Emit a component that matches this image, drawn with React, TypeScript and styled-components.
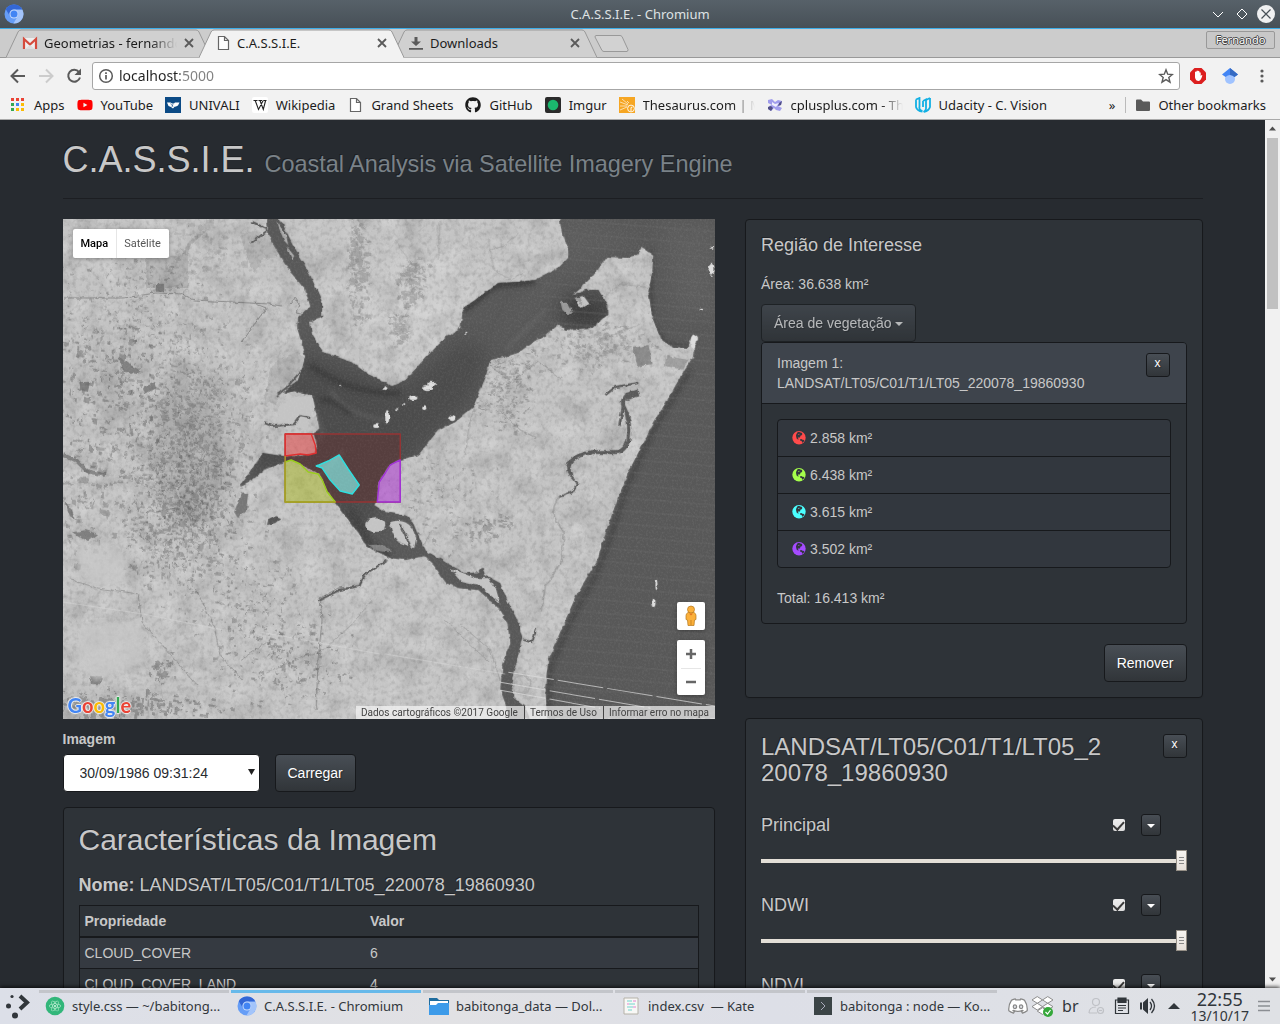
import React from "react";
import styled, { createGlobalStyle, css } from "styled-components";
import { FaGithub, FaDiscord, FaDropbox, FaReact, FaYoutube } from "react-icons/fa";

const ui = `"Noto Sans", "Open Sans", sans-serif`;
const sans = `"Liberation Sans", Arial, sans-serif`;
const roboto = `Roboto, "Liberation Sans", sans-serif`;
const edge = "#17191c";

const GlobalStyle = createGlobalStyle`
  * { box-sizing: border-box; }
  body { margin: 0; background: #272b30; overflow: hidden; }
  button, input, select { font: inherit; color: inherit; }
  button { border: 0; padding: 0; background: none; cursor: pointer; }
  h1, h2, h3, h4, p { margin: 0; font-weight: 400; }
  a { color: inherit; text-decoration: none; }
  svg { display: block; flex: none; }
`;

/* ---------- window frame ---------- */

const Screen = styled.div`
  display: flex;
  flex-direction: column;
  height: 100vh;
  font: 13px/18px ${ui};
  color: #1c1c1c;
`;

const TitleBar = styled.header`
  display: grid;
  grid-template-columns: 1fr auto 1fr;
  align-items: center;
  flex: none;
  height: 29px;
  padding: 0 4px;
  color: #dfe2e4;
  background: linear-gradient(#576169, #475057);
  border-bottom: 1px solid #3daee9;
`;

const WindowButtons = styled.div`
  display: flex;
  justify-content: flex-end;
  gap: 4px;
`;

const TabStrip = styled.nav`
  display: flex;
  flex: none;
  height: 29px;
  padding: 0 5px 0 6px;
  background: #ccc;
  border-bottom: 1px solid #999;
`;

const TabBox = styled.div<{ $active?: boolean }>`
  position: relative;
  display: flex;
  align-items: center;
  flex: none;
  gap: 6px;
  width: 205px;
  height: 29px;
  margin-right: -12px;
  padding: 0 16px 1px;
  z-index: ${(p) => (p.$active ? 2 : 1)};
`;

const TabShape = styled.svg`
  position: absolute;
  inset: 0;
  z-index: -1;
`;

const TabTitle = styled.button<{ $fade?: boolean }>`
  flex: 1;
  min-width: 0;
  overflow: hidden;
  text-align: left;
  white-space: nowrap;
  ${(p) => p.$fade && css`mask-image: linear-gradient(to right, #000 80%, transparent);`}
`;

const NewTab = styled.button`
  margin-left: 8px;
`;

const UserTag = styled.button`
  margin: 2px 0 0 auto;
  width: 69px;
  height: 18px;
  border: 1px solid #999;
  border-radius: 2px;
  background: #c8c8c8;
  color: #fff;
  font-size: 11px;
  line-height: 16px;
  text-shadow: 1px 0 #444, -1px 0 #444, 0 1px #444, 0 -1px #444;
`;

const Toolbar = styled.div`
  display: flex;
  align-items: center;
  flex: none;
  height: 34px;
  padding: 2px 9px 0 8px;
  background: #f2f2f2;
`;

const NavButtons = styled.div`
  display: flex;
  gap: 8px;
  width: 84px;
`;

const Omnibox = styled.label`
  display: flex;
  align-items: center;
  flex: 1;
  gap: 5px;
  height: 28px;
  padding: 0 5px;
  background: #fff;
  border: 1px solid #a6a6a6;
  border-radius: 3px;
`;

const Address = styled.input`
  flex: 1;
  height: 24px;
  padding: 0 0 2px;
  border: 0;
  outline: 0;
  font-size: 14px;
  color: #222;
  background: linear-gradient(to right, #222 61px, #808080 61px);
  background-clip: text;
  -webkit-text-fill-color: transparent;
`;

const Extensions = styled.div`
  display: flex;
  gap: 14px;
  padding-left: 9px;
`;

const Bookmarks = styled.nav`
  display: flex;
  align-items: center;
  flex: none;
  gap: 12px;
  height: 28px;
  padding: 0 14px 2px 10px;
  background: #f2f2f2;
  border-bottom: 1px solid #a9a9a9;
  white-space: nowrap;
`;

const Bookmark = styled.a`
  display: flex;
  align-items: center;
  gap: 8px;
`;

const BookmarkText = styled.span<{ $cut?: boolean }>`
  ${(p) => p.$cut && css`
    width: 112px;
    overflow: hidden;
    mask-image: linear-gradient(to right, #000 80%, transparent);
  `}
`;

const BookmarkEnd = styled.div`
  display: flex;
  align-items: center;
  gap: 10px;
  margin-left: auto;
`;

const Rule = styled.span`
  width: 1px;
  height: 16px;
  background: #bbb;
`;

/* ---------- page ---------- */

const Viewport = styled.div`
  display: flex;
  flex: 1;
  min-height: 0;
`;

const Page = styled.main`
  flex: 1;
  overflow: hidden;
  background: #272b30;
  color: #c8c8c8;
  font: 14px/20px ${sans};
`;

const Container = styled.div`
  max-width: 1170px;
  margin: 0 auto;
  padding: 0 15px;
`;

const PageHeader = styled.header`
  margin-bottom: 20px;
  padding: 20px 0 14px;
  border-bottom: 1px solid #1c1e22;
`;

const Brand = styled.h1`
  font-size: 36px;
  line-height: 40px;
  text-shadow: -1px -1px 0 rgba(0, 0, 0, 0.3);
`;

const Tagline = styled.small`
  font-size: 65%;
  color: #7a8288;
`;

const Row = styled.div`
  display: flex;
  margin: 0 -15px;
`;

const Column = styled.section<{ $span: number }>`
  width: calc(100% * ${(p) => p.$span} / 12);
  padding: 0 15px;
`;

const Panel = styled.section`
  margin-bottom: 20px;
  padding: 15px;
  background: #2e3338;
  border: 1px solid ${edge};
  border-radius: 4px;
  box-shadow: 0 1px 1px rgba(0, 0, 0, 0.05);
`;

const Heading = styled.h4`
  font-size: 18px;
  line-height: 20px;
  text-shadow: -1px -1px 0 rgba(0, 0, 0, 0.3);
`;

const Button = styled.button<{ $muted?: boolean }>`
  height: 38px;
  padding: 0 12px;
  color: #fff;
  text-shadow: 1px 1px 1px rgba(0, 0, 0, 0.3);
  background: linear-gradient(#484e55, #3a3f44 60%, #313539);
  border: 1px solid ${edge};
  border-radius: 4px;
  opacity: ${(p) => (p.$muted ? 0.65 : 1)};
`;

const SmallButton = styled(Button)`
  flex: none;
  width: 24px;
  height: 24px;
  padding: 0 0 4px;
  border-radius: 3px;
  font-size: 12px;
  line-height: 18px;
`;

const CaretButton = styled(SmallButton)`
  width: 20px;
  height: 22px;
  padding: 0;
`;

const Caret = styled.span`
  display: inline-block;
  vertical-align: middle;
  border: 4px solid transparent;
  border-top-color: currentColor;
  border-bottom: 0;
`;

const MapFrame = styled.div`
  position: relative;
  height: 500px;
  margin-bottom: 10px;
  overflow: hidden;
  background: #bebebe;
  font-family: ${roboto};
`;

const MapType = styled.div`
  position: absolute;
  top: 10px;
  left: 10px;
  display: flex;
  height: 29px;
  background: #fff;
  border-radius: 2px;
  box-shadow: 0 1px 4px rgba(0, 0, 0, 0.3);
  font-size: 11px;
`;

const MapTypeButton = styled.button<{ $on?: boolean }>`
  padding: 0 8px;
  color: ${(p) => (p.$on ? "#000" : "#565656")};
  font-weight: ${(p) => (p.$on ? 500 : 400)};
  & + & { padding-left: 7px; border-left: 1px solid #e6e6e6; }
`;

const MapTools = styled.div`
  position: absolute;
  right: 10px;
  bottom: 24px;
  display: grid;
  gap: 10px;
`;

const MapTool = styled.div`
  display: grid;
  justify-items: center;
  width: 28px;
  background: #fff;
  border-radius: 2px;
  box-shadow: 0 1px 4px rgba(0, 0, 0, 0.3);
`;

const ToolButton = styled.button`
  display: grid;
  place-items: center;
  width: 20px;
  height: 28px;
  & + & { height: 27px; border-top: 1px solid #e6e6e6; }
`;

const Logo = styled.a`
  position: absolute;
  left: 5px;
  bottom: 2px;
  font: 700 20px/24px Lato, sans-serif;
  text-shadow: 1px 0 1px #eee, -1px 0 1px #eee, 0 1px 1px #eee, 0 -1px 1px #eee;
`;

const LogoLetter = styled.span<{ $c: string }>`
  color: ${(p) => p.$c};
`;

const Credits = styled.div`
  position: absolute;
  right: 0;
  bottom: 0;
  display: flex;
  height: 13px;
  color: #444;
  background: rgba(245, 245, 245, 0.7);
  font-size: 10px;
  line-height: 13px;
`;

const Credit = styled.a`
  padding: 0 6px 0 5px;
  & + & { border-left: 1px solid #444; }
`;

const FieldLabel = styled.label`
  display: block;
  margin-bottom: 5px;
  font-weight: 700;
`;

const Controls = styled.div`
  display: flex;
  gap: 15px;
  margin-bottom: 15px;
`;

const SelectWrap = styled.div`
  position: relative;
  width: 197px;
`;

const Select = styled.select`
  appearance: none;
  width: 100%;
  height: 38px;
  padding: 0 16px;
  color: #272b30;
  background: #fff;
  border: 1px solid ${edge};
  border-radius: 4px;
`;

const SelectArrow = styled.svg`
  position: absolute;
  right: 5px;
  top: 15px;
  pointer-events: none;
`;

const Title = styled.h2`
  margin-bottom: 18px;
  font-size: 30px;
  line-height: 34px;
  text-shadow: -1px -1px 0 rgba(0, 0, 0, 0.3);
`;

const Table = styled.table`
  width: 100%;
  margin-top: 10px;
  border: 1px solid ${edge};
  border-collapse: collapse;
  th, td { padding: 5px; text-align: left; line-height: 20px; border-top: 1px solid ${edge}; }
  th { border-bottom: 2px solid ${edge}; }
  th:first-child { width: 286px; }
  tbody tr:nth-child(odd) { background: #353a41; }
`;

const Area = styled.p`
  margin: 19px 0 10px;
`;

const Inner = styled.section`
  border: 1px solid ${edge};
  border-radius: 4px;
`;

const InnerHead = styled.header`
  display: flex;
  justify-content: space-between;
  padding: 10px 16px 10px 15px;
  background: #3e444c;
  border-bottom: 1px solid ${edge};
  border-radius: 3px 3px 0 0;
`;

const InnerBody = styled.div`
  padding: 15px;
`;

const List = styled.ul`
  margin: 0 0 20px;
  padding: 0;
  list-style: none;
  background: #32373e;
  border: 1px solid ${edge};
  border-radius: 4px;
`;

const Item = styled.li`
  display: flex;
  align-items: center;
  gap: 4px;
  height: 36px;
  padding: 0 14px;
  & + & { height: 37px; border-top: 1px solid ${edge}; }
`;

const Actions = styled.div`
  display: flex;
  justify-content: flex-end;
  margin-top: 20px;
`;

const LayerHead = styled.header`
  display: flex;
  justify-content: space-between;
  margin-bottom: 28px;
`;

const LayerTitle = styled.h3`
  width: 82%;
  font-size: 24px;
  line-height: 26px;
  word-break: break-all;
  text-shadow: -1px -1px 0 rgba(0, 0, 0, 0.3);
`;

const Layer = styled.div`
  height: 80px;
`;

const LayerRow = styled.div`
  display: flex;
  align-items: center;
  gap: 16px;
  height: 22px;
  padding-right: 26px;
`;

const LayerName = styled.label`
  flex: 1;
  font-size: 18px;
  text-shadow: -1px -1px 0 rgba(0, 0, 0, 0.3);
`;

const Check = styled.input`
  appearance: none;
  display: grid;
  place-items: center;
  width: 12px;
  height: 12px;
  margin: 0;
  background: linear-gradient(#eee, #ddd);
  border-radius: 2px;
  &:checked::after {
    content: "";
    width: 5px;
    height: 9px;
    margin-bottom: 3px;
    border: solid #3a3a3a;
    border-width: 0 2px 2px 0;
    transform: rotate(42deg);
  }
`;

const Slider = styled.input`
  appearance: none;
  display: block;
  width: 100%;
  height: 21px;
  margin: 14px 0 0;
  background: linear-gradient(#e3dfd7, #e3dfd7) center / 100% 4px no-repeat;
  &::-webkit-slider-thumb {
    appearance: none;
    width: 11px;
    height: 21px;
    border: 1px solid #958f86;
    background:
      linear-gradient(#888, #888) 50% 6px / 5px 1px no-repeat,
      linear-gradient(#888, #888) 50% 9px / 5px 1px no-repeat,
      linear-gradient(#888, #888) 50% 12px / 5px 1px no-repeat,
      linear-gradient(#f6f4f0, #e6e0da);
  }
`;

const Scrollbar = styled.div`
  display: flex;
  flex-direction: column;
  align-items: center;
  flex: none;
  width: 15px;
  background: #f1f1f1;
`;

const Thumb = styled.div`
  width: 11px;
  height: 171px;
  margin: 1px 0 auto;
  background: #c1c1c1;
`;

/* ---------- desktop panel ---------- */

const Taskbar = styled.footer`
  position: relative;
  display: flex;
  align-items: center;
  flex: none;
  height: 36px;
  padding-right: 9px;
  color: #31363b;
  background: linear-gradient(to right, #dcdfe8, #e1e1e4 35%, #dddfe7 60%, #dfe1e5);
  box-shadow: 0 -1px 4px rgba(0, 0, 0, 0.8);
`;

const Launcher = styled.button`
  width: 39px;
  padding-left: 5px;
`;

const Tasks = styled.div`
  display: flex;
  gap: 2px;
  align-self: stretch;
`;

const Task = styled.button<{ $active?: boolean }>`
  display: flex;
  align-items: center;
  gap: 7px;
  width: 190px;
  margin-top: 2px;
  padding: 0 0 5px 6px;
  border-top: 3px solid ${(p) => (p.$active ? "#67b9ea" : "#c3c5ca")};
  white-space: nowrap;
`;

const TaskText = styled.span`
  white-space: pre;
`;

const Tray = styled.div`
  display: flex;
  align-items: center;
  gap: 8px;
  margin-left: auto;
`;

const TrayApps = styled.div`
  display: flex;
  gap: 3px;
`;

const Layout = styled.button`
  font-size: 16px;
  line-height: 22px;
`;

const Clock = styled.time`
  display: grid;
  justify-items: center;
  font-size: 18px;
  line-height: 20px;
`;

const Day = styled.span`
  font-size: 14px;
  line-height: 14px;
`;

/* ---------- icons ---------- */

const ChromiumIcon = ({ size = 20 }: { size?: number }) => (
  <svg width={size} height={size} viewBox="0 0 20 20">
    <circle cx="10" cy="10" r="9.5" fill="#669df6" />
    <path d="M1.8 5.2A9.5 9.5 0 0 1 18.3 5.6H10A4.5 4.5 0 0 0 6 12.2Z" fill="#3367d6" />
    <path d="M18.4 5.7A9.5 9.5 0 0 1 9.4 19.5L13.9 12A4.5 4.5 0 0 0 10 5.7Z" fill="#aecbfa" opacity=".85" />
    <circle cx="10" cy="10" r="4.5" fill="#c6dafc" />
    <circle cx="10" cy="10" r="3.5" fill="#4285f4" />
  </svg>
);

const PageIcon = () => (
  <svg width="16" height="16" viewBox="0 0 16 16" fill="#fff" stroke="#666" strokeWidth="1.2">
    <path d="M3.5 1.5h6l4 4v9h-10zM9.5 1.5v4h4" />
  </svg>
);

const GmailIcon = () => (
  <svg width="16" height="16" viewBox="0 0 16 16">
    <path d="M1 3h14v11H1z" fill="#eee" />
    <path d="M2 14V4l6 5.500L14 4v10" fill="none" stroke="#d54b3d" strokeWidth="2.2" />
    <path d="M3 14l5-4 5 4z" fill="#ddd" />
  </svg>
);

const DownloadIcon = () => (
  <svg width="16" height="16" viewBox="0 0 16 16" fill="#5a5a5a">
    <path d="M6.500 2h3v4.500H13L8 11 3 6.500h3.500zM1 13h14v1.700H1z" />
  </svg>
);

const CloseIcon = () => (
  <svg width="12" height="12" viewBox="0 0 12 12" stroke="#5a5a5a" strokeWidth="1.8">
    <path d="M2 2l8 8M10 2l-8 8" />
  </svg>
);

const AppsIcon = () => (
  <svg width="16" height="16" viewBox="0 0 16 16">
    {["#ea4335", "#ea4335", "#ea4335", "#34a853", "#4285f4", "#fbbc05", "#34a853", "#fbbc05", "#fbbc05"].map((c, i) => (
      <rect key={i} x={1 + (i % 3) * 5} y={1 + Math.floor(i / 3) * 5} width="3" height="3" fill={c} />
    ))}
  </svg>
);

const UnivaliIcon = () => (
  <svg width="16" height="16" viewBox="0 0 16 16">
    <path d="M0 0h16v16H0z" fill="#0b4a85" />
    <path d="M2 5.500h3.500l1.500 1h2l1-1h4.500l-1.500 3-2 1-1.500.3L8 11.500 6 10 3.500 9z" fill="#fff" />
    <path d="M5.500 6.500l2.500 3M8 7l-1 3" fill="none" stroke="#0b4a85" strokeWidth=".6" />
  </svg>
);

const WikiIcon = () => (
  <svg width="16" height="16" viewBox="0 0 16 16">
    <rect width="16" height="16" rx="2" fill="#fff" />
    <path d="M1.5 3.5h4M6.5 3.5h3.5M11.5 3.5h3M3.2 3.5l3.3 9 4.7-9M8 3.5l3.3 9 2.3-9" fill="none" stroke="#222" strokeWidth="1.1" />
  </svg>
);

const ImgurIcon = () => (
  <svg width="16" height="16" viewBox="0 0 16 16">
    <rect width="16" height="16" rx="2" fill="#2b2b2b" />
    <circle cx="8" cy="8" r="5.3" fill="#1bb76e" />
  </svg>
);

const ThesaurusIcon = () => (
  <svg width="16" height="16" viewBox="0 0 16 16">
    <path d="M0 0h16v16H0z" fill="#f6a623" />
    <g fill="none" stroke="#fff" strokeWidth=".9">
      <path d="M1 5l8 3M3 2l6 5M1 9h7M1 13l7-3M8 4l2 2" opacity=".7" />
      <circle cx="12" cy="11.500" r="3.400" />
      <path d="M12 14v-3.500l1.500-.5" />
    </g>
  </svg>
);

const CppIcon = () => (
  <svg width="16" height="16" viewBox="0 0 16 16">
    <path d="M1 3l4-1 3 3 3-2 4 1-1 4-3 1 4 2-2 3-4-1-2-2-3 3-3-2 1-3 3-1-4-2z" fill="#a09cec" />
    <path d="M1 10l3-1 2 2-2 3-3-2zM12 6l3-2-1 4-3 1z" fill="#514f86" />
    <path d="M5 5l3 2 4-1-3 4-4-2z" fill="#eeeefc" />
  </svg>
);

const UdacityIcon = () => (
  <svg width="16" height="16" viewBox="0 0 16 16" fill="none" stroke="#12b0e4" strokeWidth="1.8">
    <path d="M1 2.500l3.500-1.500v8.500a3.500 3.500 0 0 0 3 4.500M1 2.500v7.500q1 4 6.500 4.500M8 4l3-1.500v9q0 2-2.500 3.500M8 4v6M15 1v9q-1 3.500-6 5" />
    <path d="M11 3l4-2" />
  </svg>
);

const FolderIcon = () => (
  <svg width="14" height="14" viewBox="0 0 14 14" fill="#5a5a5a">
    <path d="M1 1.500h4l2 2h6q1 0 1 1V12q0 1-1 1H1q-1 0-1-1V2.500q0-1 1-1z" />
  </svg>
);

const Globe = ({ color }: { color: string }) => (
  <svg width="14" height="14" viewBox="0 0 14 14">
    <circle cx="7" cy="6.800" r="6.700" fill={color} />
    <g fill="#32373e">
      <path d="M5.500 1.300l1.500-.5 1.400.8 1.300.1.700 1.300-.7 1.200-1.300.6-.3 1.500-1.200.5-.8-.6-.3 1 1 .7-.4.700-1.500-.7L4.200 6 4 4.300l.6-1.500z" />
      <path d="M7.800 8.600l1.500-.6 1.200.8 1.800.1-.4 1.500-1 1.200-.9-.2-.3-1.300-1.400-.3z" />
    </g>
    <path d="M6.200 3.200l1-.4.3.8-.9.500z" fill={color} />
  </svg>
);

const ArrowHead = ({ up }: { up?: boolean }) => (
  <svg width="15" height="17" viewBox="0 0 15 17" fill="#505050">
    <path d={up ? "M4 10.500h7L7.500 6.500z" : "M4 6.500h7L7.500 10.500z"} />
  </svg>
);

/* ---------- satellite scene ---------- */

const WATER =
  "M267 219L268 235 278 252 290 272 305 290 310 306 298 317 297 328 301 342 305 357 302 368 298 380 290 386 284 393 295 391 304 394 312 395 315 408 319 428 314 434 317 446 315 453 300 456 283 456 263 453 252 468 240 486 252 480 264 470 283 462 291 460 304 466 320 474 327 490 335 502 350 522 362 538 367 547 380 553 390 558 405 560 424 556 435 567 445 582 457 588 478 590 497 607 507 623 510 643 502 667 500 690 505 703 508 719 530 719 525 707 513 697 512 677 517 660 522 637 517 620 507 600 500 583 485 575 482 567 478 572 465 573 445 562 425 550 420 540 413 523 405 515 385 512 374 505 377 500 378 482 390 464 400 460 418 455 438 430 455 422 473 407 479 392 485 378 490 360 505 357 518 353 533 342 545 336 558 325 565 330 592 328 607 315 607 305 598 290 585 290 572 295 592 277 607 257 625 258 638 255 641 247 653 255 652 272 648 292 652 318 660 338 672 348 687 348 693 335 697 337 692 358 685 368 668 398 652 425 628 472 618 497 607 527 597 560 577 593 562 627 548 660 545 687 547 719H730V205H557L562 235 568 248 568 258 558 268 535 280 518 282 498 283 482 295 463 308 460 328 445 338 428 355 405 380 392 386 370 375 353 363 337 357 323 352 312 335 310 322 322 318 322 302 310 275 293 245 280 219Z";

const SPECKS: [number, number, number, number][] = [
  [427, 388, 5, 3], [431, 384, 3, 2], [413, 398, 4, 2], [387, 417, 2, 7], [424, 408, 2, 2], [376, 426, 2, 2], [385, 388, 2, 2],
  [452, 418, 3, 3], [434, 383, 2, 1], [711, 270, 3, 6], [711, 248, 2, 1], [701, 310, 2, 1], [656, 585, 1, 5],
  [653, 603, 2, 4], [693, 342, 3, 7], [340, 386, 1, 1], [404, 404, 1, 1], [466, 333, 1, 1], [397, 409, 1, 1],
];

function makeRandom(seed: number) {
  let s = seed;
  return () => {
    s = (s * 16807) % 2147483647;
    return s / 2147483647;
  };
}

interface Cluster { x: number; y: number; rx: number; ry: number; n: number; size: number; o: number; seed: number }

const CLUSTERS: Cluster[] = [
  { x: 190, y: 440, rx: 60, ry: 90, n: 1000, size: 4, o: 0.24, seed: 11 },
  { x: 180, y: 520, rx: 50, ry: 70, n: 700, size: 4, o: 0.26, seed: 29 },
  { x: 110, y: 390, rx: 50, ry: 70, n: 200, size: 6, o: 0.3, seed: 37 },
  { x: 130, y: 310, rx: 90, ry: 60, n: 300, size: 3, o: 0.24, seed: 41 },
  { x: 85, y: 500, rx: 28, ry: 55, n: 70, size: 8, o: 0.24, seed: 53 },
  { x: 120, y: 704, rx: 80, ry: 14, n: 200, size: 7, o: 0.3, seed: 59 },
  { x: 160, y: 670, rx: 14, ry: 16, n: 40, size: 7, o: 0.3, seed: 61 },
  { x: 290, y: 660, rx: 60, ry: 40, n: 150, size: 4, o: 0.28, seed: 67 },
  { x: 240, y: 600, rx: 60, ry: 60, n: 150, size: 4, o: 0.24, seed: 71 },
  { x: 357, y: 262, rx: 11, ry: 50, n: 190, size: 6, o: 0.22, seed: 79 },
  { x: 410, y: 283, rx: 16, ry: 24, n: 100, size: 6, o: 0.22, seed: 83 },
  { x: 398, y: 328, rx: 9, ry: 16, n: 60, size: 6, o: 0.22, seed: 89 },
  { x: 505, y: 385, rx: 28, ry: 38, n: 220, size: 3, o: 0.26, seed: 97 },
  { x: 590, y: 345, rx: 55, ry: 24, n: 200, size: 4, o: 0.2, seed: 101 },
  { x: 485, y: 525, rx: 22, ry: 14, n: 50, size: 6, o: 0.26, seed: 103 },
  { x: 440, y: 500, rx: 50, ry: 50, n: 100, size: 3, o: 0.22, seed: 107 },
  { x: 185, y: 250, rx: 45, ry: 30, n: 60, size: 8, o: 0.12, seed: 109 },
];

const speckles = CLUSTERS.map((c) => {
  const r = makeRandom(c.seed * 7919);
  let d = "";
  for (let i = 0; i < c.n; i++) {
    const x = c.x + (r() + r() + r() - 1.5) * c.rx;
    const y = c.y + (r() + r() + r() - 1.5) * c.ry;
    const w = 1 + r() * r() * c.size * 1.3;
    const h = 1 + r() * r() * c.size;
    d += `M${x.toFixed(1)} ${y.toFixed(1)}l${w.toFixed(1)} ${(w * 0.2).toFixed(1)}l${(-w * 0.1).toFixed(1)} ${h.toFixed(1)}l${(-w).toFixed(1)} ${(-h * 0.2).toFixed(1)}z`;
  }
  return { d, o: c.o };
});

const Scene = () => (
  <svg width="100%" height="100%" viewBox="63 219 652 500" preserveAspectRatio="xMidYMid slice" role="img" aria-label="Mapa">
    <defs>
      <clipPath id="water"><path d={WATER} /></clipPath>
      <filter id="ragged" x="-5%" y="-5%" width="110%" height="110%">
        <feTurbulence type="fractalNoise" baseFrequency="0.18" numOctaves="2" seed="4" />
        <feDisplacementMap in="SourceGraphic" scale="4" xChannelSelector="R" yChannelSelector="G" />
      </filter>
      <filter id="fine" x="0" y="0" width="100%" height="100%" colorInterpolationFilters="sRGB">
        <feTurbulence type="fractalNoise" baseFrequency="0.22" numOctaves="4" seed="8" />
        <feColorMatrix values="0 0 0 0 .2  0 0 0 0 .2  0 0 0 0 .2  1.2 0 0 0 -0.55" />
      </filter>
      <filter id="light" x="0" y="0" width="100%" height="100%" colorInterpolationFilters="sRGB">
        <feTurbulence type="fractalNoise" baseFrequency="0.05" numOctaves="5" seed="15" />
        <feColorMatrix values="0 0 0 0 1  0 0 0 0 1  0 0 0 0 1  0 1.4 0 0 -0.6" />
      </filter>
      <filter id="patch" x="0" y="0" width="100%" height="100%" colorInterpolationFilters="sRGB">
        <feTurbulence type="fractalNoise" baseFrequency="0.04" numOctaves="5" seed="22" />
        <feColorMatrix values="0 0 0 0 .3  0 0 0 0 .3  0 0 0 0 .3  0 0 1.4 0 -0.66" />
      </filter>
      <filter id="grain" x="0" y="0" width="100%" height="100%" colorInterpolationFilters="sRGB">
        <feTurbulence type="fractalNoise" baseFrequency="0.5" numOctaves="2" seed="3" />
        <feColorMatrix values="0 0 0 0 1  0 0 0 0 1  0 0 0 0 1  .5 0 0 0 -0.2" />
      </filter>
      <filter id="soft"><feGaussianBlur stdDeviation="9" /></filter>
      <filter id="soft2"><feGaussianBlur stdDeviation="2" /></filter>
    </defs>

    <path d="M63 219h652v500H63z" fill="#c4c4c4" />
    <g filter="url(#soft)">
      <ellipse cx="190" cy="450" rx="42" ry="80" fill="#8d8d8d" opacity=".42" />
      <ellipse cx="110" cy="390" rx="40" ry="50" fill="#9c9c9c" opacity=".2" />
      <ellipse cx="110" cy="708" rx="80" ry="8" fill="#777" opacity=".25" />
      <ellipse cx="420" cy="310" rx="60" ry="60" fill="#ddd" opacity=".3" />
    </g>
    <path d="M63 219h652v500H63z" filter="url(#patch)" opacity=".35" />
    <path d="M63 219h652v500H63z" filter="url(#light)" opacity=".35" />
    <path d="M63 219h652v500H63z" filter="url(#fine)" opacity=".34" />
    <g filter="url(#ragged)" fill="#2e2e2e">
      {speckles.map((s, i) => <path key={i} d={s.d} opacity={s.o} />)}
      <path d="M240 235l14-4 22 6 2 20-14 2-10 14-8-18z" opacity=".12" />
      <path d="M158 275h7v16h-7zM210 228l-18 16-6 16-8 2 12-22zM146 256h42v32h-42z" opacity=".14" />
      <path d="M298 352l6 6-4 20-14 4-10 22-12-4 6-30 8-10z" opacity=".1" />
    </g>
    <g fill="none" stroke="#555" strokeWidth=".9" opacity=".6" filter="url(#ragged)">
      <path d="M64 298h60l32-5 26 1 12 6 74 4 14 2M290 304l5-6 4 6-3 8 10 2M256 304l10 4-10 14-14 20" />
      <path d="M70 580l28 8 40 6 4 28 30 34 26 30M196 590l18 36 6 30 22 24M270 640l-30 20" opacity=".7" />
      <path d="M320 598l18-10 22-2 4-12 20-12M320 600l2 20-4 40-2 50" />
      <path d="M432 530l-12 20M445 620l20 20 24 22M372 600l-20 24-26 24-60 24M500 680l-10-30-30-26" opacity=".5" />
      <path d="M475 405l-6 20-4 30M500 410l20 20 16 8M489 365l22 18 26-22 24 18" opacity=".6" />
      <path d="M490 250l14-4 14-12M490 250l4 20 16 10 14-8M440 220l-2 40M395 240l20 30M600 300l20-16 30 4M600 340l40-16" opacity=".4" />
    </g>
    <g filter="url(#ragged)">
      <path d={WATER} fill="#585858" />
    </g>
    <g clipPath="url(#water)">
      <g filter="url(#soft)">
        <path d="M300 350l60 20 40 20 60-50 30 10-20 50-70 70-50 90-80-60-30-60z" fill="#454545" opacity=".75" />
        <path d="M500 340l40-60 100-40-60-20h-30l10 60z" fill="#606060" opacity=".6" />
        <path d="M660 225l55 0v90h-40z" fill="#646464" opacity=".5" />
        <ellipse cx="585" cy="312" rx="26" ry="18" fill="#3a3a3a" opacity=".9" />
      </g>
      <g filter="url(#soft2)" fill="none" strokeWidth="2">
        <path d="M650 250l0 70 14 24 24 4M690 370l-38 62-26 56-16 50-14 36-24 44-22 50-2 50" stroke="#3b3b3b" strokeWidth="4" opacity=".7" />
        <path d="M310 365q40 30 90 28M320 400q20 0 30 14M464 310l30-24 40-4" stroke="#3c3c3c" strokeWidth="6" />
        <path d="M330 390q20 28 60 30M314 408l8 22-2 12M344 450l-24 26M545 310l-40 40" stroke="#777" opacity=".6" />
        <path d="M350 510l20 34 20 12" stroke="#3c3c3c" strokeWidth="8" opacity=".6" />
      </g>
      <g stroke="#6d6d6d" strokeWidth="2" opacity=".28">
        {Array.from({ length: 42 }, (_, i) => <path key={i} d={`M540 ${205 + i * 13}l175 ${14}`} />)}
      </g>
    </g>
    <g filter="url(#ragged)">
      <g fill="#c4c4c4">
        <path d="M280 404q14-8 30-8 4 12 0 20l-4 14-14-6-16-2z" />
        <ellipse cx="375" cy="525" rx="10" ry="7" />
        <path d="M390 522q14-4 22 6l4 10-2 10q-10-4-16-6-8-10-8-20zM450 568l26 10 12 0 8 12 4 14-20-18-18-4z" />
        <path d="M575 298l8-2 6 8-6 4-6-4z" />
      </g>
      <path d="M560 302l6 0 6 10-4 3-6-5zM574 298l6-1 2 8z" fill="#999" />
      <path d="M368 545q14-2 20 3l4 4q-12 0-20-3z" fill="#999" opacity=".7" />
      <g fill="#dedede">
        {SPECKS.map(([x, y, rx, ry], i) => <ellipse key={i} cx={x} cy={y} rx={rx} ry={ry} />)}
      </g>
      <path d="M633 348l15-3 4 19-15 3z" fill="#777" opacity=".75" />
      <path d="M666 356l22 4-6 10-18-4z" fill="#777" opacity=".5" />
      <g fill="none" stroke="#5a5a5a" strokeLinejoin="round">
        <path d="M638 393l-14 4" strokeWidth="7" />
        <path d="M626 396q-5 4-3 10 8 14 5 34-4 12-12 12l-24 0q-16 3-20 8-7 6-2 16" strokeWidth="4" />
        <path d="M623 404l-4 22M605 395l10-8 23-4" strokeWidth="2.500" />
        <path d="M568 460l2 15 7 8-5 9-14 5" strokeWidth="2" />
        <path d="M558 497q-8 12-2 24l8 12-3 28-16 26-4 24" strokeWidth="1.500" opacity=".3" />
        <path d="M264 422l10 4 20-2 6-8 10 2M300 372l-14 16-10 8M252 222l16 8M250 244l18-14" strokeWidth="2" />
        <path d="M387 560l-22 14-6 12-20 4-20 10" strokeWidth="2" />
        <path d="M400 524l12 26M386 540l24 12M524 640l8 2 4-14" strokeWidth="2" />
        <path d="M63 455l14 6 10 10 18 4" strokeWidth="4" opacity=".6" />
      </g>
      <path d="M268 520l8-4 5 2-6 5-8 2z" fill="#555" />
      <path d="M242 492l6 2-2 16-8 8-4-6z" fill="#777" />
      <path d="M118 356l14 10 8 4-4 4-12-2zM143 388l12-6 2 6-12 6zM80 382l10 0-2 10-8-2zM64 500l8 10 4 10-6-4zM72 532l14-2 12 4-10 8zM156 284h8v8h-8zM90 676h12l-2 8h-8z" fill="#666" opacity=".7" />
      <path d="M276 221l10 14 2 10-4-4zM286 246l8 10-2 4z" fill="#aaa" />
      <circle cx="521" cy="684" r="9" fill="none" stroke="#aaa" strokeWidth="2" />
    </g>
    <path d="M78 550l30-8 20 20-4 20-32 4-14-16zM80 625l60-4 6 40-50 20-20-20z" fill="#c8c8c8" opacity=".7" filter="url(#soft2)" />
    <g stroke="#ddd" strokeWidth="1">
      <path d="M63 602l80 12 80 16M260 632l120 22M385 654l120 20" fill="none" opacity=".45" />
      <path d="M508 672l207 34M500 682l150 26M500 690l100 18" opacity=".7" strokeDasharray="46 4" />
    </g>
    <path d="M63 219h652v500H63z" filter="url(#grain)" opacity=".3" />

    <g strokeWidth="1.400" strokeLinejoin="round">
      <path d="M285 434h115v68H285z" fill="rgba(120,20,20,.24)" stroke="#963434" />
      <path d="M285 434h26l4 11 1 8-8 2-8-1-15 2z" fill="rgba(255,90,90,.45)" stroke="#e03030" />
      <path d="M285 502v-40l6-2 9 4 8 8 10 2 4 6 5 12 8 10z" fill="rgba(190,240,60,.42)" stroke="#9acd1e" />
      <path d="M285 456v46h50" fill="none" stroke="#a89a2a" />
      <path d="M316 466l12-5 11-6 9 14 11 16-7 9-12-3-10-11-8-12z" fill="rgba(140,255,250,.62)" stroke="#2ee0e0" />
      <path d="M377 502l2-20 6-9 5-8 10-5v42z" fill="rgba(190,90,245,.55)" stroke="#a234d8" />
    </g>
  </svg>
);

/* ---------- composed parts ---------- */

const Tab = ({ icon, title, active, fade }: { icon: React.ReactNode; title: string; active?: boolean; fade?: boolean }) => (
  <TabBox $active={active}>
    <TabShape width="205" height="29" viewBox="0 0 205 29">
      <path d="M0 28.500L12 3Q13 1 15 1H190Q192 1 193 3L205 28.500Z" fill={active ? "#f2f2f2" : "#d0d0d0"} />
      <path d="M0 28.500L12 3Q13 1 15 1H190Q192 1 193 3L205 28.500" fill="none" stroke="#999" />
      {active && <path d="M1 28.500h203" stroke="#f2f2f2" />}
    </TabShape>
    {icon}
    <TabTitle $fade={fade}>{title}</TabTitle>
    <button aria-label={`Close ${title}`}><CloseIcon /></button>
  </TabBox>
);

const bookmarks: { icon: React.ReactNode; text: string; cut?: boolean }[] = [
  { icon: <AppsIcon />, text: "Apps" },
  { icon: <FaYoutube size={16} color="#f00" />, text: "YouTube" },
  { icon: <UnivaliIcon />, text: "UNIVALI" },
  { icon: <WikiIcon />, text: "Wikipedia" },
  { icon: <PageIcon />, text: "Grand Sheets" },
  { icon: <FaGithub size={16} />, text: "GitHub" },
  { icon: <ImgurIcon />, text: "Imgur" },
  { icon: <ThesaurusIcon />, text: "Thesaurus.com | M", cut: true },
  { icon: <CppIcon />, text: "cplusplus.com - The", cut: true },
  { icon: <UdacityIcon />, text: "Udacity - C. Vision" },
];

const areas = [
  { color: "#ff4b4b", value: "2.858 km²" },
  { color: "#a5ff4b", value: "6.438 km²" },
  { color: "#4bffff", value: "3.615 km²" },
  { color: "#a54bff", value: "3.502 km²" },
];

const properties = [
  ["CLOUD_COVER", "6"],
  ["CLOUD_COVER_LAND", "4"],
];

const letters: [string, string][] = [
  ["G", "#4285f4"], ["o", "#ea4335"], ["o", "#fbbc05"], ["g", "#4285f4"], ["l", "#34a853"], ["e", "#ea4335"],
];

const tasks: { icon: React.ReactNode; text: string; active?: boolean }[] = [
  {
    text: "style.css — ~/babitong...",
    icon: (
      <svg width="20" height="20" viewBox="0 0 20 20">
        <circle cx="10" cy="10" r="9.300" fill="#32b67a" />
        <FaReact x="4" y="4" size={12} color="#c5f0d8" />
      </svg>
    ),
  },
  { text: "C.A.S.S.I.E. - Chromium", active: true, icon: <ChromiumIcon /> },
  {
    text: "babitonga_data — Dol...",
    icon: (
      <svg width="20" height="20" viewBox="0 0 20 20">
        <path d="M0 2h8l2 2h10v6H0z" fill="#1f6c9e" />
        <path d="M1 5h18v4H1z" fill="#fff" />
        <path d="M0 9h7l2-2h11v12H0z" fill="#3d9be9" />
      </svg>
    ),
  },
  {
    text: "index.csv  — Kate",
    icon: (
      <svg width="20" height="20" viewBox="0 0 20 20">
        <path d="M3 2h14v16H3z" fill="#f8f8f6" stroke="#b5b2a8" />
        <path d="M6 5h5M8 8h6M6 11h6M7 14h4" stroke="#9ee0dc" strokeWidth="1.500" />
        <path d="M12 5h3M6 8h2M12 11h3" stroke="#eaa9dd" strokeWidth="1.500" />
      </svg>
    ),
  },
  {
    text: "babitonga : node — Ko...",
    icon: (
      <svg width="20" height="20" viewBox="0 0 20 20">
        <path d="M1 1h18v18H1z" fill="#3b4446" />
        <path d="M8 6l4 4-4 4" fill="none" stroke="#aab" />
      </svg>
    ),
  },
];

const LayerControl = ({ name }: { name: string }) => (
  <Layer>
    <LayerRow>
      <LayerName htmlFor={`show-${name}`}>{name}</LayerName>
      <Check id={`show-${name}`} type="checkbox" defaultChecked />
      <CaretButton aria-label={`Opções ${name}`}><Caret /></CaretButton>
    </LayerRow>
    <Slider type="range" min="0" max="100" defaultValue="100" aria-label={`Opacidade ${name}`} />
  </Layer>
);

export default function App() {
  return (
    <Screen>
      <GlobalStyle />
      <TitleBar>
        <ChromiumIcon />
        <span>C.A.S.S.I.E. - Chromium</span>
        <WindowButtons>
          <button aria-label="Minimize">
            <svg width="20" height="20" viewBox="0 0 20 20" fill="none" stroke="#fff"><path d="M5 8l5 5 5-5" /></svg>
          </button>
          <button aria-label="Maximize">
            <svg width="20" height="20" viewBox="0 0 20 20" fill="none" stroke="#fff"><path d="M10 5l5 5-5 5-5-5z" /></svg>
          </button>
          <button aria-label="Close">
            <svg width="20" height="20" viewBox="0 0 20 20">
              <circle cx="10" cy="10" r="9" fill="#eff0f1" />
              <path d="M5.500 5.500l9 9M14.500 5.500l-9 9" stroke="#475057" strokeWidth="1.200" />
            </svg>
          </button>
        </WindowButtons>
      </TitleBar>

      <TabStrip>
        <Tab icon={<GmailIcon />} title="Geometrias - fernando" fade />
        <Tab icon={<PageIcon />} title="C.A.S.S.I.E." active />
        <Tab icon={<DownloadIcon />} title="Downloads" />
        <NewTab aria-label="New tab">
          <svg width="38" height="20" viewBox="0 0 38 20">
            <path d="M3 2.500h24q1 0 2 1l6 13q0 2-1 2H11q-1 0-2-1L2 4q0-1.500 1-1.500z" fill="#d2d2d2" stroke="#999" />
          </svg>
        </NewTab>
        <UserTag>Fernando</UserTag>
      </TabStrip>

      <Toolbar>
        <NavButtons>
          <button aria-label="Back">
            <svg width="20" height="20" viewBox="0 0 20 20" fill="none" stroke="#5a5a5a" strokeWidth="2"><path d="M17 10H4M10 3.500L3.500 10l6.500 6.500" /></svg>
          </button>
          <button aria-label="Forward">
            <svg width="20" height="20" viewBox="0 0 20 20" fill="none" stroke="#ccc" strokeWidth="2"><path d="M3 10h13M10 3.500l6.500 6.500-6.500 6.500" /></svg>
          </button>
          <button aria-label="Reload">
            <svg width="20" height="20" viewBox="0 0 20 20" fill="none" stroke="#5a5a5a" strokeWidth="2">
              <path d="M15 6A6 6 0 1 0 16 11.500" />
              <path d="M17 2.500v6.500h-6.500z" fill="#5a5a5a" stroke="none" />
            </svg>
          </button>
        </NavButtons>
        <Omnibox>
          <svg width="16" height="16" viewBox="0 0 16 16" fill="none" stroke="#5a5a5a" strokeWidth="1.500">
            <circle cx="8" cy="8" r="6.300" /><path d="M8 7v4.500M8 4.300v1.600" strokeWidth="1.700" />
          </svg>
          <Address aria-label="Address" defaultValue="localhost:5000" spellCheck={false} />
          <button aria-label="Bookmark this page">
            <svg width="16" height="16" viewBox="0 0 16 16" fill="none" stroke="#5a5a5a" strokeWidth="1.400">
              <path d="M8 1.800l1.700 4.400 4.700.3-3.600 3 1.200 4.700-4-2.600-4 2.600 1.200-4.700-3.600-3 4.700-.3z" />
            </svg>
          </button>
        </Omnibox>
        <Extensions>
          <button aria-label="Ad blocker">
            <svg width="18" height="18" viewBox="0 0 18 18">
              <path d="M5.500 1h7L17 5.500v7L12.500 17h-7L1 12.500v-7z" fill="#dc1f1f" />
              <path d="M6 10.500V5q.7-1 1.400 0V4q.8-1.200 1.500 0v.300q.8-1 1.500 0V5.500q.8-.6 1.300.2V9l1-1q1 0 .5 1-1.200 4.500-3.500 5-3 0-3.700-3.500z" fill="#fff" />
            </svg>
          </button>
          <button aria-label="Scholar">
            <svg width="18" height="18" viewBox="0 0 18 18">
              <circle cx="9" cy="12" r="5" fill="#a0c3ff" />
              <path d="M9 1l8 6.500-3.500 2.500q-4.500-4-9 0L1 7.500z" fill="#4285f4" />
              <path d="M9 1l8 6.500-3.500 2.500q-2-2-4.500-2z" fill="#356ac3" />
            </svg>
          </button>
          <button aria-label="Menu">
            <svg width="18" height="18" viewBox="0 0 18 18" fill="#5a5a5a">
              <circle cx="9" cy="4" r="1.600" /><circle cx="9" cy="9" r="1.600" /><circle cx="9" cy="14" r="1.600" />
            </svg>
          </button>
        </Extensions>
      </Toolbar>

      <Bookmarks>
        {bookmarks.map((b) => (
          <Bookmark key={b.text} href="#">
            {b.icon}
            <BookmarkText $cut={b.cut}>{b.text}</BookmarkText>
          </Bookmark>
        ))}
        <BookmarkEnd>
          <button aria-label="More bookmarks">»</button>
          <Rule />
          <Bookmark href="#"><FolderIcon />Other bookmarks</Bookmark>
        </BookmarkEnd>
      </Bookmarks>

      <Viewport>
        <Page>
          <Container>
            <PageHeader>
              <Brand>C.A.S.S.I.E. <Tagline>Coastal Analysis via Satellite Imagery Engine</Tagline></Brand>
            </PageHeader>
            <Row>
              <Column $span={7}>
                <MapFrame>
                  <Scene />
                  <MapType>
                    <MapTypeButton $on>Mapa</MapTypeButton>
                    <MapTypeButton>Satélite</MapTypeButton>
                  </MapType>
                  <MapTools>
                    <MapTool>
                      <ToolButton aria-label="Street View">
                        <svg width="14" height="22" viewBox="0 0 14 22" fill="#fbb03b" stroke="#b5771a" strokeWidth=".7">
                          <path d="M4 7.500h6q2 1 2 3v4l-1.500.5L10 20.500H4L3.500 15 2 14.500v-4q0-2 2-3z" />
                          <circle cx="7" cy="4.500" r="3.500" />
                          <path d="M5 8.500l2 2 2-2z" fill="#e07020" stroke="none" />
                          <path d="M7 15v5" />
                        </svg>
                      </ToolButton>
                    </MapTool>
                    <MapTool>
                      <ToolButton aria-label="Aumentar zoom">
                        <svg width="12" height="12" viewBox="0 0 12 12" stroke="#666" strokeWidth="2.500"><path d="M6 1v10M1 6h10" /></svg>
                      </ToolButton>
                      <ToolButton aria-label="Diminuir zoom">
                        <svg width="12" height="12" viewBox="0 0 12 12" stroke="#666" strokeWidth="2.500"><path d="M1 6h10" /></svg>
                      </ToolButton>
                    </MapTool>
                  </MapTools>
                  <Logo href="#" aria-label="Google">
                    {letters.map(([l, c], i) => <LogoLetter key={i} $c={c}>{l}</LogoLetter>)}
                  </Logo>
                  <Credits>
                    <Credit>Dados cartográficos ©2017 Google</Credit>
                    <Credit href="#">Termos de Uso</Credit>
                    <Credit href="#">Informar erro no mapa</Credit>
                  </Credits>
                </MapFrame>
                <FieldLabel htmlFor="image">Imagem</FieldLabel>
                <Controls>
                  <SelectWrap>
                    <Select id="image"><option>30/09/1986 09:31:24</option></Select>
                    <SelectArrow width="7" height="7" viewBox="0 0 7 7"><path d="M0 0h7L3.500 6z" fill="#222" /></SelectArrow>
                  </SelectWrap>
                  <Button>Carregar</Button>
                </Controls>
                <Panel>
                  <Title>Características da Imagem</Title>
                  <Heading><b>Nome:</b> LANDSAT/LT05/C01/T1/LT05_220078_19860930</Heading>
                  <Table>
                    <thead><tr><th>Propriedade</th><th>Valor</th></tr></thead>
                    <tbody>
                      {properties.map(([k, v]) => <tr key={k}><td>{k}</td><td>{v}</td></tr>)}
                    </tbody>
                  </Table>
                </Panel>
              </Column>
              <Column $span={5}>
                <Panel>
                  <Heading>Região de Interesse</Heading>
                  <Area>Área: 36.638 km²</Area>
                  <Button $muted>Área de vegetação <Caret /></Button>
                  <Inner>
                    <InnerHead>
                      <span>Imagem 1:<br />LANDSAT/LT05/C01/T1/LT05_220078_19860930</span>
                      <SmallButton>x</SmallButton>
                    </InnerHead>
                    <InnerBody>
                      <List>
                        {areas.map((a) => <Item key={a.value}><Globe color={a.color} />{a.value}</Item>)}
                      </List>
                      <p>Total: 16.413 km²</p>
                    </InnerBody>
                  </Inner>
                  <Actions><Button>Remover</Button></Actions>
                </Panel>
                <Panel>
                  <LayerHead>
                    <LayerTitle>LANDSAT/LT05/C01/T1/LT05_220078_19860930</LayerTitle>
                    <SmallButton>x</SmallButton>
                  </LayerHead>
                  <LayerControl name="Principal" />
                  <LayerControl name="NDWI" />
                  <LayerControl name="NDVI" />
                </Panel>
              </Column>
            </Row>
          </Container>
        </Page>
        <Scrollbar>
          <ArrowHead up />
          <Thumb />
          <ArrowHead />
        </Scrollbar>
      </Viewport>

      <Taskbar>
        <Launcher aria-label="Launcher">
          <svg width="26" height="26" viewBox="0 0 26 26" fill="#31363b">
            <circle cx="7" cy="3.500" r="1.600" /><circle cx="3.500" cy="13" r="2.500" /><circle cx="10" cy="22.500" r="3" />
            <path d="M15 3l7 6.500-7 6.500" fill="none" stroke="#31363b" strokeWidth="4" />
          </svg>
        </Launcher>
        <Tasks>
          {tasks.map((t) => (
            <Task key={t.text} $active={t.active}>{t.icon}<TaskText>{t.text}</TaskText></Task>
          ))}
        </Tasks>
        <Tray>
          <TrayApps>
            <svg width="22" height="22" viewBox="-1 0 24 22"><FaDiscord size={22} color="#fff" stroke="#888" strokeWidth={40} /></svg>
            <svg width="22" height="22" viewBox="0 0 22 22">
              <FaDropbox size={21} color="#fff" stroke="#888" strokeWidth={24} />
              <circle cx="16" cy="17" r="5" fill="#35a83a" />
              <path d="M13.500 17l2 2 3-4" fill="none" stroke="#fff" strokeWidth="1.200" />
            </svg>
          </TrayApps>
          <Layout>br</Layout>
          <svg width="18" height="18" viewBox="0 0 18 18" fill="none" stroke="#bfc1c6" strokeWidth="1.200">
            <circle cx="9" cy="5" r="3.500" /><path d="M2 16q0-6 7-6M2 16h8" /><circle cx="13.500" cy="13.500" r="3" /><path d="M12 13.500h3" />
          </svg>
          <svg width="18" height="18" viewBox="0 0 18 18" fill="none" stroke="#31363b" strokeWidth="1.200">
            <path d="M2.500 3h13v13.500h-13z" /><path d="M5 1h8v4.500H5z" fill="#31363b" /><path d="M5 8.500h8M5 11h8M5 13.500h5" />
          </svg>
          <svg width="18" height="18" viewBox="0 0 18 18" fill="#31363b">
            <path d="M1 5.500h2v7H1zM4 5.500L9 1v16l-5-4.500z" /><path d="M11 5q3 4 0 8M12.500 2q6 7 0 14" fill="none" stroke="#31363b" strokeWidth="1.300" />
          </svg>
          <svg width="18" height="18" viewBox="0 0 18 18" fill="#31363b"><path d="M3 12h12L9 6z" /></svg>
          <Clock>22:55<Day>13/10/17</Day></Clock>
          <svg width="14" height="14" viewBox="0 0 14 14" stroke="#8b8e93" strokeWidth="1.400"><path d="M1 2.500h12M1 7h12M1 11.500h12" /></svg>
        </Tray>
      </Taskbar>
    </Screen>
  );
}
